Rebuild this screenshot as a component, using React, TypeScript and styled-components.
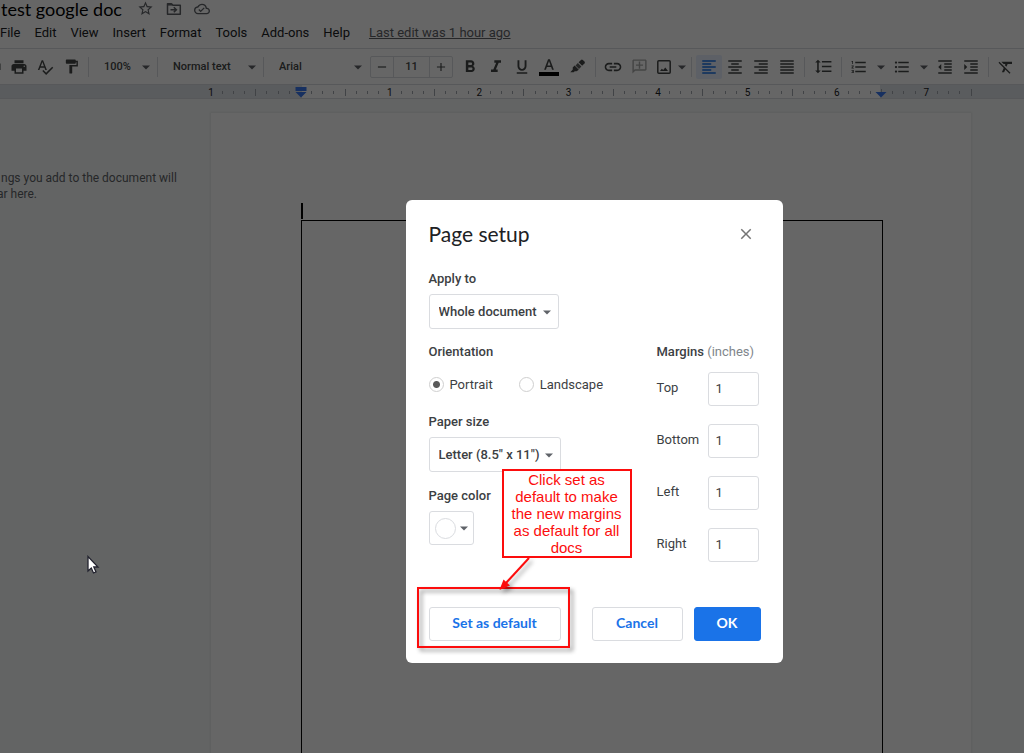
import React from "react";
import styled, { createGlobalStyle } from "styled-components";
import {
  MdAdd,
  MdClose,
  MdFormatAlignCenter,
  MdFormatAlignJustify,
  MdFormatAlignLeft,
  MdFormatAlignRight,
  MdFormatBold,
  MdFormatClear,
  MdFormatColorText,
  MdFormatIndentDecrease,
  MdFormatIndentIncrease,
  MdFormatItalic,
  MdFormatLineSpacing,
  MdFormatListBulleted,
  MdFormatListNumbered,
  MdFormatPaint,
  MdFormatUnderlined,
  MdLink,
  MdOutlineAddComment,
  MdOutlineCloudDone,
  MdPrint,
  MdRedo,
  MdRemove,
  MdSpellcheck,
  MdStarBorder,
} from "react-icons/md";

const GlobalStyle = createGlobalStyle`
  *, *::before, *::after { box-sizing: border-box; }
  body { margin: 0; font-family: Roboto, "Liberation Sans", sans-serif; overflow: hidden; }
  button, input, select { font-family: inherit; margin: 0; }
`;

const display = `Lato, "Open Sans", sans-serif`;

const Shell = styled.div`
  display: flex;
  flex-direction: column;
  height: 100vh;
  overflow: hidden;
  background: #f8fbfa;
  color: #202124;
`;

const Header = styled.header`
  flex: none;
  background: #fff;
  border-bottom: 1px solid #dadce0;
`;

const TitleRow = styled.div`
  display: flex;
  align-items: center;
  height: 17px;
  padding-left: 1px;
  color: #5f6368;
`;

const DocTitle = styled.h1`
  margin: 0 10px 0 0;
  font: 400 18px/20px ${display};
  color: #000;
`;

const TitleButton = styled.button`
  display: flex;
  align-items: center;
  justify-content: center;
  width: 28px;
  height: 18px;
  padding: 0;
  border: 0;
  background: none;
  color: inherit;
`;

const MenuBar = styled.nav`
  display: flex;
  align-items: center;
  gap: 14px;
  height: 31px;
`;

const MenuButton = styled.button`
  padding: 0;
  border: 0;
  background: none;
  font-size: 13px;
  line-height: 20px;
  color: #202124;
`;

const LastEdit = styled.a`
  margin-left: 5px;
  font-size: 13px;
  line-height: 20px;
  color: #5f6368;
  text-decoration: underline;
`;

const Toolbar = styled.div`
  flex: none;
  display: flex;
  align-items: center;
  height: 36px;
  background: #fff;
  border-bottom: 1px solid #dadce0;
  color: #444746;
`;

const Group = styled.div<{ $pull?: number }>`
  flex: none;
  display: flex;
  align-items: center;
  margin-left: ${(p) => (p.$pull ? -p.$pull : 0)}px;
`;

const Tool = styled.button<{ $active?: boolean; $faded?: boolean; $width?: number }>`
  flex: none;
  display: flex;
  align-items: center;
  justify-content: center;
  width: ${(p) => p.$width ?? 26}px;
  height: 24px;
  padding: 0;
  border: 0;
  border-radius: 2px;
  background: ${(p) => (p.$active ? "#e8f0fe" : "none")};
  color: ${(p) => (p.$active ? "#1a73e8" : "inherit")};
  opacity: ${(p) => (p.$faded ? 0.45 : 1)};
  > svg {
    flex: none;
  }
`;

const Divider = styled.span`
  flex: none;
  width: 1px;
  height: 20px;
  margin: 0 4px;
  background: #dadce0;
`;

const PickerBox = styled.span<{ $width: number }>`
  flex: none;
  display: grid;
  align-items: center;
  width: ${(p) => p.$width}px;
  > * {
    grid-area: 1 / 1;
  }
  > svg {
    justify-self: end;
    pointer-events: none;
  }
`;

const Picker = styled.select`
  appearance: none;
  width: 100%;
  height: 24px;
  padding: 0 16px 0 11px;
  border: 0;
  background: none;
  color: #444746;
  font-size: 11px;
  font-weight: 500;
`;

const SizeStepper = styled.div`
  flex: none;
  display: flex;
  align-items: center;
  width: 83px;
  height: 22px;
  margin: 0 4px 0 5px;
  border: 1px solid #dadce0;
  border-radius: 2px;
`;

const SizeInput = styled.input`
  width: 37px;
  height: 20px;
  padding: 0;
  border: 1px solid #dadce0;
  border-width: 0 1px;
  background: none;
  color: #444746;
  font-size: 11px;
  font-weight: 500;
  text-align: center;
`;

const TextColor = styled.span`
  display: flex;
  flex-direction: column;
  align-items: center;
  width: 20px;
  &::after {
    content: "";
    width: 20px;
    height: 4px;
    margin-top: -3px;
    background: #000;
  }
`;

const Mirror = styled.span`
  display: flex;
  transform: scaleX(-1);
`;

const RulerBar = styled.div`
  flex: none;
  height: 14px;
  padding-left: 211px;
  background: #e2e5ea;
  border-bottom: 1px solid #dadce0;
`;

const Ruler = styled.div`
  position: relative;
  display: grid;
  grid-template-columns: repeat(68, 1fr) 0;
  align-items: start;
  max-width: 760px;
  height: 13px;
  background: linear-gradient(to right, transparent 12%, #fff 12%, #fff 88%, transparent 88%);
`;

const Mark = styled.span`
  display: flex;
  align-items: center;
  justify-content: center;
  width: 0;
  height: 15px;
  font-size: 10px;
  line-height: 15px;
  color: #202124;
`;

const Tick = styled.i<{ $tall?: boolean }>`
  flex: none;
  width: 1px;
  height: ${(p) => (p.$tall ? 7 : 3)}px;
  background: #a4a9ae;
`;

const Indent = styled.svg<{ $at: number }>`
  position: absolute;
  top: 2px;
  left: ${(p) => p.$at}%;
  margin-left: -6px;
  fill: #3b78f0;
`;

const Workspace = styled.main`
  flex: 1;
  display: flex;
  padding-top: 14px;
`;

const Outline = styled.aside`
  flex: none;
  width: 211px;
  padding-top: 57px;
  overflow: hidden;
  color: #5f6368;
  font-size: 12px;
  line-height: 16px;
`;

const OutlineText = styled.p<{ $shift: number }>`
  margin: 0 0 0 ${(p) => p.$shift}px;
  white-space: nowrap;
`;

const Sheet = styled.article`
  flex: 0 1 760px;
  display: flex;
  flex-direction: column;
  padding: 90px 88px 0 90px;
  background: #fff;
  box-shadow: 0 0 2px 1px #e8ebec;
`;

const Caret = styled.span`
  width: 2px;
  height: 16px;
  margin-bottom: 1px;
  background: #000;
`;

const Frame = styled.div`
  flex: 1;
  border: 1px solid #000;
  border-bottom: 0;
`;

const Scrim = styled.div`
  position: fixed;
  inset: 0;
  display: flex;
  align-items: flex-start;
  justify-content: center;
  padding: 200px 0 0 164px;
  background: rgba(0, 0, 0, 0.6);
`;

const Dialog = styled.section`
  position: relative;
  width: 377px;
  padding: 22px 22px 22px 23px;
  border-radius: 6px;
  background: #fff;
  color: #3c4043;
  font-size: 13px;
`;

const DialogHead = styled.header`
  display: flex;
  align-items: center;
  justify-content: space-between;
  height: 24px;
  margin-bottom: 23px;
`;

const DialogTitle = styled.h2`
  margin: 0;
  font: 400 21px/24px ${display};
  color: #202124;
`;

const CloseButton = styled.button`
  display: flex;
  padding: 6px;
  border: 0;
  background: none;
  color: #757575;
`;

const Columns = styled.div`
  display: flex;
  justify-content: space-between;
`;

const Legend = styled.label`
  display: block;
  height: 20px;
  line-height: 20px;
  font-weight: 500;
`;

const Field = styled.div<{ $gap: number }>`
  margin-bottom: ${(p) => p.$gap}px;
`;

const SelectBox = styled(PickerBox)`
  margin-top: 5px;
  > svg {
    margin-right: 5px;
  }
`;

const Select = styled.select`
  appearance: none;
  width: 100%;
  height: 35px;
  padding: 0 0 0 9px;
  border: 1px solid #dadce0;
  border-radius: 3px;
  background: #fff;
  color: #3c4043;
  font-size: 13px;
  font-weight: 500;
`;

const RadioRow = styled.div`
  display: flex;
  align-items: center;
  gap: 26px;
  height: 20px;
  margin-top: 12px;
`;

const RadioLabel = styled.label`
  display: flex;
  align-items: center;
  gap: 6px;
`;

const Radio = styled.input`
  appearance: none;
  width: 15px;
  height: 15px;
  border: 1px solid #cfcfcf;
  border-radius: 50%;
  background: #fff;
  &:checked {
    background: radial-gradient(circle, #5a5a5a 3px, #fff 4px);
  }
`;

const ColorButton = styled.button`
  display: flex;
  align-items: center;
  justify-content: space-between;
  width: 45px;
  height: 34px;
  margin-top: 5px;
  padding: 0 2px 0 5px;
  border: 1px solid #dadce0;
  border-radius: 3px;
  background: #fff;
  > * {
    flex: none;
  }
`;

const Swatch = styled.span`
  width: 21px;
  height: 21px;
  border: 1px solid #dadce0;
  border-radius: 50%;
  background: #fff;
`;

const Margins = styled.fieldset`
  display: flex;
  flex-direction: column;
  gap: 18px;
  width: 105px;
  min-width: 0;
  margin: 73px 0 0;
  padding: 0 2px 0 1px;
  border: 0;
`;

const MarginsTitle = styled.legend`
  height: 30px;
  padding: 0;
  line-height: 20px;
  font-weight: 500;
  white-space: nowrap;
  span {
    font-weight: 400;
    color: #80868b;
  }
`;

const MarginRow = styled.div`
  display: flex;
  align-items: center;
  justify-content: space-between;
  label {
    padding-bottom: 3px;
  }
`;

const MarginInput = styled.input`
  width: 51px;
  height: 34px;
  padding: 0 7px 2px;
  border: 1px solid #dadce0;
  border-radius: 3px;
  color: #3c4043;
  font-size: 13px;
`;

const Footer = styled.footer`
  display: flex;
  justify-content: space-between;
  margin-top: 45px;
`;

const Actions = styled.div`
  display: flex;
  gap: 11px;
`;

const Button = styled.button<{ $width: number; $primary?: boolean }>`
  width: ${(p) => p.$width}px;
  height: 34px;
  padding: 0 0 2px;
  border: 1px solid ${(p) => (p.$primary ? "#1a73e8" : "#dadce0")};
  border-radius: 3px;
  background: ${(p) => (p.$primary ? "#1a73e8" : "#fff")};
  color: ${(p) => (p.$primary ? "#fff" : "#1a73e8")};
  && {
    font: 700 14px/20px ${display};
  }
`;

const Callout = styled.p`
  position: absolute;
  top: 269px;
  left: 96px;
  width: 130px;
  height: 89px;
  margin: 0;
  padding: 0 4px;
  border: 2px solid #fc0d0d;
  background: #fff;
  color: #fc0d0d;
  font: 15px/17px "Liberation Sans", Arial, sans-serif;
  text-align: center;
`;

const Highlight = styled.div`
  position: absolute;
  top: 387px;
  left: 11px;
  width: 153px;
  height: 61px;
  border: 2px solid #fc0d0d;
  filter: drop-shadow(3px 3px 2px rgba(0, 0, 0, 0.45));
  pointer-events: none;
`;

const Arrow = styled.svg`
  position: absolute;
  top: 354px;
  left: 88px;
  filter: drop-shadow(3px 3px 2px rgba(0, 0, 0, 0.35));
  pointer-events: none;
`;

const Pointer = styled.svg`
  position: fixed;
  top: 555px;
  left: 86px;
`;

const CaretDown = () => (
  <svg width="14" height="14" viewBox="0 0 14 14" fill="#5f6368" aria-hidden="true">
    <path d="M3 5.500h8L7 9.500z" />
  </svg>
);

const FolderMove = () => (
  <svg width="16" height="14" viewBox="0 0 16 14" fill="none" stroke="currentColor" strokeWidth="1.500" aria-hidden="true">
    <path d="M1.500 1.800h4l1.500 1.500h7.300v9H1.500z" strokeLinejoin="round" />
    <path d="M1.500 2.800h5" />
    <path d="M4.500 7.800h5.500M7.800 5.300l2.600 2.500-2.600 2.500" />
  </svg>
);

const Marker = () => (
  <svg width="18" height="18" viewBox="0 0 18 18" fill="currentColor" aria-hidden="true">
    <path d="M10.600 4.300 13 1.900a1.300 1.300 0 0 1 1.800 0l1.700 1.700a1.300 1.300 0 0 1 0 1.800L14.100 7.800z" />
    <path d="M9.900 5 13.400 8.500 11 10.900 7.500 7.400z" opacity="0.85" />
    <path d="M6.600 7.500 10.800 11.700 8.600 13.300l-1.900-.1L5.700 14.200H2.300l2.500-2.700-.1-1.900z" />
  </svg>
);

const Picture = () => (
  <svg width="16" height="16" viewBox="0 0 16 16" fill="none" stroke="currentColor" strokeWidth="1.500" aria-hidden="true">
    <rect x="1.800" y="1.800" width="12.400" height="12.400" rx="1" />
    <path d="M4 12 5.800 9.800l1.400 1.300L9.300 8.600l2.700 3.400z" fill="currentColor" stroke="none" />
  </svg>
);

const menus = ["File", "Edit", "View", "Insert", "Format", "Tools", "Add-ons", "Help"];
const sides = ["Top", "Bottom", "Left", "Right"];

function ToolPicker({ label, value, width }: { label: string; value: string; width: number }) {
  return (
    <PickerBox $width={width}>
      <Picker aria-label={label} defaultValue={value}>
        <option>{value}</option>
      </Picker>
      <CaretDown />
    </PickerBox>
  );
}

function RulerMarks() {
  return (
    <Ruler>
      {Array.from({ length: 69 }, (_, i) => (
        <Mark key={i}>
          {i % 8 === 0 ? (i === 8 ? null : Math.abs(i / 8 - 1)) : <Tick $tall={i % 4 === 0} />}
        </Mark>
      ))}
      <Indent $at={11.8} width="12" height="11" viewBox="0 0 12 11">
        <path d="M0.500 0h11v4h-11zM0.500 5h11L6 10.500z" />
      </Indent>
      <Indent $at={88.2} width="12" height="11" viewBox="0 0 12 11">
        <path d="M0.500 5h11L6 10.500z" />
      </Indent>
    </Ruler>
  );
}

function PageSetup() {
  return (
    <Dialog role="dialog" aria-labelledby="setup-title">
      <DialogHead>
        <DialogTitle id="setup-title">Page setup</DialogTitle>
        <CloseButton aria-label="Close">
          <MdClose size={18} />
        </CloseButton>
      </DialogHead>
      <Columns>
        <div>
          <Field $gap={13}>
            <Legend htmlFor="apply">Apply to</Legend>
            <SelectBox $width={130}>
              <Select id="apply">
                <option>Whole document</option>
              </Select>
              <CaretDown />
            </SelectBox>
          </Field>
          <Field $gap={18}>
            <Legend as="div" id="orientation">Orientation</Legend>
            <RadioRow role="radiogroup" aria-labelledby="orientation">
              <RadioLabel>
                <Radio type="radio" name="orientation" defaultChecked />
                Portrait
              </RadioLabel>
              <RadioLabel>
                <Radio type="radio" name="orientation" />
                Landscape
              </RadioLabel>
            </RadioRow>
          </Field>
          <Field $gap={14}>
            <Legend htmlFor="paper">Paper size</Legend>
            <SelectBox $width={132}>
              <Select id="paper">
                <option>Letter (8.5" x 11")</option>
              </Select>
              <CaretDown />
            </SelectBox>
          </Field>
          <Legend htmlFor="color">Page color</Legend>
          <ColorButton id="color">
            <Swatch />
            <CaretDown />
          </ColorButton>
        </div>
        <Margins>
          <MarginsTitle>
            Margins <span>(inches)</span>
          </MarginsTitle>
          {sides.map((side) => (
            <MarginRow key={side}>
              <label htmlFor={side}>{side}</label>
              <MarginInput id={side} defaultValue="1" />
            </MarginRow>
          ))}
        </Margins>
      </Columns>
      <Footer>
        <Button $width={132}>Set as default</Button>
        <Actions>
          <Button $width={91}>Cancel</Button>
          <Button $width={67} $primary>OK</Button>
        </Actions>
      </Footer>
      <Highlight />
      <Arrow width="44" height="42" viewBox="0 0 44 42">
        <path d="M35 4 12 29" stroke="#fc0d0d" strokeWidth="2" />
        <path d="M5.500 36 9.500 25.500 16 31.500z" fill="#fc0d0d" />
      </Arrow>
      <Callout>Click set as default to make the new margins as default for all docs</Callout>
    </Dialog>
  );
}

export default function App() {
  return (
    <Shell>
      <GlobalStyle />
      <Header>
        <TitleRow>
          <DocTitle>test google doc</DocTitle>
          <TitleButton aria-label="Star"><MdStarBorder size={17} /></TitleButton>
          <TitleButton aria-label="Move"><FolderMove /></TitleButton>
          <TitleButton aria-label="Saved"><MdOutlineCloudDone size={16} /></TitleButton>
        </TitleRow>
        <MenuBar>
          {menus.map((menu) => (
            <MenuButton key={menu}>{menu}</MenuButton>
          ))}
          <LastEdit href="#history">Last edit was 1 hour ago</LastEdit>
        </MenuBar>
      </Header>
      <Toolbar>
        <Group $pull={20}>
          <Tool aria-label="Redo"><MdRedo size={18} /></Tool>
          <Tool aria-label="Print"><MdPrint size={18} /></Tool>
          <Tool aria-label="Spelling"><MdSpellcheck size={18} /></Tool>
          <Tool aria-label="Paint format"><MdFormatPaint size={17} /></Tool>
        </Group>
        <Divider />
        <ToolPicker label="Zoom" value="100%" width={60} />
        <Divider />
        <ToolPicker label="Style" value="Normal text" width={97} />
        <Divider />
        <ToolPicker label="Font" value="Arial" width={97} />
        <SizeStepper>
          <Tool $width={22} aria-label="Smaller"><MdRemove size={14} /></Tool>
          <SizeInput aria-label="Font size" defaultValue="11" />
          <Tool $width={22} aria-label="Larger"><MdAdd size={14} /></Tool>
        </SizeStepper>
        <Group>
          <Tool aria-label="Bold"><MdFormatBold size={20} /></Tool>
          <Tool aria-label="Italic"><MdFormatItalic size={20} /></Tool>
          <Tool aria-label="Underline"><MdFormatUnderlined size={18} /></Tool>
          <Tool $width={28} aria-label="Text color">
            <TextColor><MdFormatColorText size={18} /></TextColor>
          </Tool>
          <Tool $width={28} aria-label="Highlight"><Marker /></Tool>
        </Group>
        <Divider />
        <Group>
          <Tool aria-label="Link"><MdLink size={20} /></Tool>
          <Tool $faded aria-label="Comment"><Mirror><MdOutlineAddComment size={17} /></Mirror></Tool>
          <Tool $width={24} aria-label="Image"><Picture /></Tool>
          <Tool $width={11} aria-label="Image options"><CaretDown /></Tool>
        </Group>
        <Divider />
        <Group>
          <Tool $active aria-label="Align left"><MdFormatAlignLeft size={18} /></Tool>
          <Tool aria-label="Align center"><MdFormatAlignCenter size={18} /></Tool>
          <Tool aria-label="Align right"><MdFormatAlignRight size={18} /></Tool>
          <Tool aria-label="Justify"><MdFormatAlignJustify size={18} /></Tool>
        </Group>
        <Divider />
        <Tool $width={28} aria-label="Line spacing"><MdFormatLineSpacing size={19} /></Tool>
        <Divider />
        <Group>
          <Tool aria-label="Numbered list"><MdFormatListNumbered size={18} /></Tool>
          <Tool $width={17} aria-label="Numbering options"><CaretDown /></Tool>
          <Tool aria-label="Bulleted list"><MdFormatListBulleted size={18} /></Tool>
          <Tool $width={17} aria-label="Bullet options"><CaretDown /></Tool>
          <Tool aria-label="Decrease indent"><MdFormatIndentDecrease size={18} /></Tool>
          <Tool aria-label="Increase indent"><MdFormatIndentIncrease size={18} /></Tool>
        </Group>
        <Divider />
        <Tool aria-label="Clear formatting"><MdFormatClear size={18} /></Tool>
      </Toolbar>
      <RulerBar>
        <RulerMarks />
      </RulerBar>
      <Workspace>
        <Outline>
          <OutlineText $shift={1}>ngs you add to the document will</OutlineText>
          <OutlineText $shift={-3}>ar here.</OutlineText>
        </Outline>
        <Sheet>
          <Caret />
          <Frame />
        </Sheet>
      </Workspace>
      <Scrim>
        <PageSetup />
      </Scrim>
      <Pointer width="14" height="20" viewBox="0 0 14 20">
        <path d="M2 1.500V16l3.300-3 2.200 5 2.500-1.100-2.200-4.900H12z" fill="#fff" stroke="#23232f" strokeWidth="1.300" />
      </Pointer>
    </Shell>
  );
}
